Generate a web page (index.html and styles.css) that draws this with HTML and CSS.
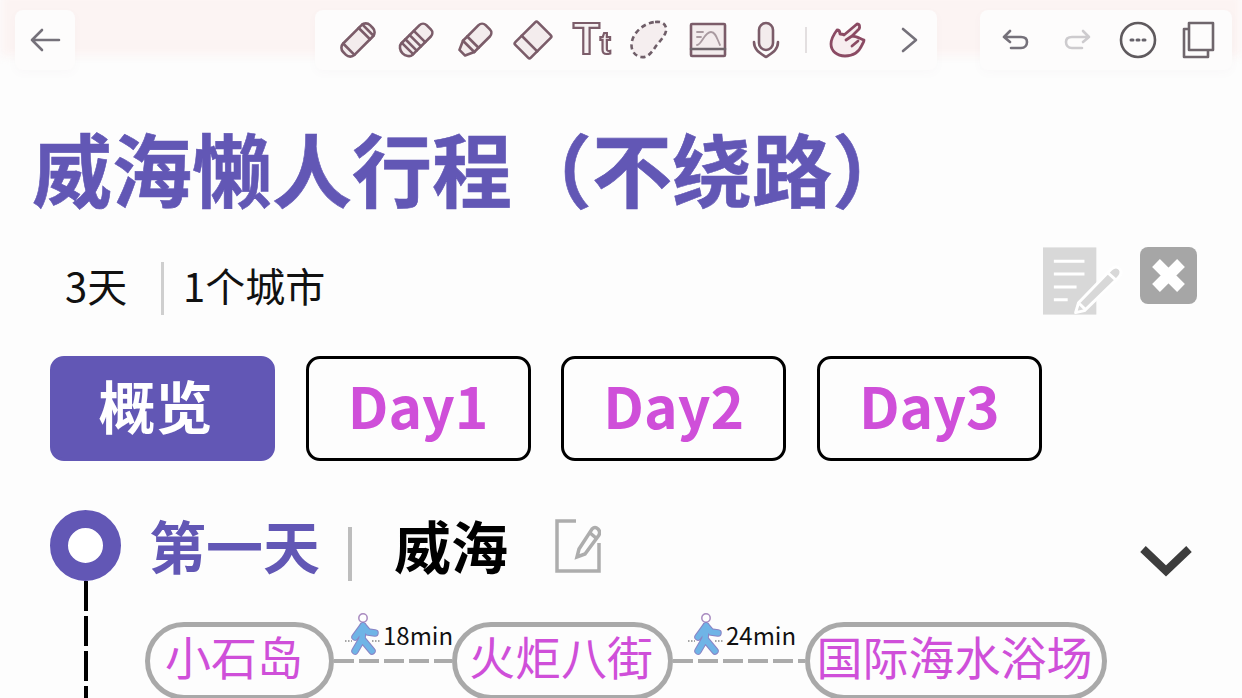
FILE: index.html
```html
<!DOCTYPE html>
<html lang="zh-CN">
<head>
  <meta charset="UTF-8">
  <meta name="viewport" content="width=device-width, initial-scale=1.0">
  <title>威海懒人行程</title>
  <link rel="stylesheet" href="styles.css">
</head>
<body>
  <div class="page">
    <div class="glow"></div>

    <!-- Top toolbars -->
    <header class="topbar">
      <div class="panel panel-back">
        <svg class="icon" viewBox="0 0 38 38"><path class="thin" d="M33 19H6M16 9 6 19l10 10"/></svg>
      </div>
      <div class="panel panel-tools">
        <svg class="icon" viewBox="0 0 38 38"><g transform="rotate(-45 19 19)"><rect class="ink" x="0" y="11" width="38" height="16" rx="6"/><path class="ink" d="M6 11v16M28 11v16M33 11v16"/></g></svg>
        <svg class="icon" viewBox="0 0 38 38"><g transform="rotate(-45 19 19)"><path class="ink" d="M6 11h26a5 5 0 0 1 5 5v6a5 5 0 0 1-5 5H6c-3 0-6-4-6-8s3-8 6-8z"/><path class="ink" d="M7 11v16M12 11v16M18 11v16M24 11v16"/></g></svg>
        <svg class="icon" viewBox="0 0 38 38"><g transform="rotate(-45 19 19)"><path class="ink" d="M10 11h22a5 5 0 0 1 5 5v6a5 5 0 0 1-5 5H10L1 23v-8z"/><path class="ink" d="M10 11v16M16 11v16"/></g></svg>
        <svg class="icon" viewBox="0 0 38 38"><g transform="rotate(-45 19 19)"><rect class="ink" x="3" y="8" width="32" height="22" rx="2"/><path class="ink" d="M14 8v22"/></g></svg>
        <svg class="icon" viewBox="0 0 38 38"><text class="tt" x="1" y="33">T<tspan class="tt-small">t</tspan></text></svg>
        <svg class="icon" viewBox="0 0 38 38"><path class="lasso" d="M25 1c8-1 12 3 11 9-1 5-6 10-10 15-4 6-8 12-15 11C4 35 0 28 2 20 4 11 14 2 25 1z"/></svg>
        <svg class="icon" viewBox="0 0 38 38"><rect class="ink" x="2" y="3" width="34" height="32" rx="1"/><path class="ink-plain" d="M2 28h34"/><path class="thin-soft" d="M8 24c5 0 7-13 14-13 5 0 6 7 9 13M8 11h6M8 16h4"/></svg>
        <svg class="icon" viewBox="0 0 38 38"><path class="ink-open" d="M7 21c0 8 6 11 12 15 6-4 12-7 12-15"/><rect class="ink" x="12" y="2" width="14" height="27" rx="7"/></svg>
        <span class="tool-sep"></span>
        <svg class="icon" viewBox="0 0 38 38"><path class="hand" d="M16 14 29 3c3 0 3 3 2 5l-7 7c4 0 7 2 12 4 0 2-1 3-2 5-3 7-9 11-17 11-8 0-14-5-14-12 0-6 3-10 6-14 2 0 3 2 3 4 1 0 3 0 4 1zM24 15l-6 4M30 20l-6 5"/></svg>
        <svg class="icon icon-next" viewBox="0 0 38 38"><path class="thin" d="m12 8 13 11-13 11"/></svg>
      </div>
      <div class="panel panel-actions">
        <svg class="icon" viewBox="0 0 38 38"><path class="thin" d="M13 10 7 16l6 5M7 16h17c4 0 6 2 6 5s-2 6-6 6H14"/></svg>
        <svg class="icon icon-muted" viewBox="0 0 38 38"><path class="thin" d="m25 10 6 6-6 5M31 16H14c-4 0-6 2-6 5s2 6 6 6h10"/></svg>
        <svg class="icon" viewBox="0 0 38 38"><circle class="ring" cx="19" cy="19" r="17"/><path class="dots" d="M12 19h2M18 19h2M24 19h2"/></svg>
        <svg class="icon" viewBox="0 0 38 38"><path class="ink-plain" d="M9 2h24v27H9zM9 8H4v28h24v-7"/></svg>
      </div>
    </header>

    <h1 class="title">威海懒人行程（不绕路）</h1>

    <!-- Trip summary -->
    <div class="meta">
      <span class="meta-days">3天</span>
      <span class="meta-cities">1个城市</span>
      <div class="meta-actions">
        <svg class="note" viewBox="0 0 80 68">
          <rect class="note-page" width="54" height="68"/>
          <path class="note-lines" d="M11 14h31M11 27h31M11 40h23M11 53h14"/>
          <path class="note-pen" d="M36 56 33 66l9-2 34-33c3-3 4-6 2-9-2-3-6-3-9 0z"/>
          <path class="note-pen-line" d="m37 57 6 6M66 26l8 7"/>
        </svg>
        <button class="close-btn" type="button">
          <svg viewBox="0 0 57 57"><path d="M16 16l25 25M41 16 16 41"/></svg>
        </button>
      </div>
    </div>

    <nav class="tabs">
      <a class="tab tab-active">概览</a>
      <a class="tab">Day1</a>
      <a class="tab">Day2</a>
      <a class="tab">Day3</a>
    </nav>

    <!-- Day 1 -->
    <section class="day">
      <div class="day-head">
        <span class="day-dot"></span>
        <span class="day-name">第一天</span>
        <span class="day-sep"></span>
        <span class="day-city">威海</span>
        <svg class="day-edit" viewBox="0 0 46 54">
          <path d="M21 2H2v50h42V24"/>
          <path d="M24 30 22 38l8-3 14-19c1-2 1-4-1-6-2-2-4-2-6 0zM34 13l7 6"/>
        </svg>
        <svg class="day-toggle" viewBox="0 0 52 32"><path d="M3 4l23 22L49 4"/></svg>
      </div>
      <div class="day-body">
        <span class="day-line"></span>
        <div class="route">
          <span class="stop stop-first">小石岛</span>
          <div class="leg leg-first">
            <div class="leg-info">
              <svg class="walker" viewBox="0 0 36 42">
                <path class="walker-trail" d="M0 28h7M27 28h8"/>
                <circle class="walker-head" cx="18" cy="5" r="4.2"/>
                <path class="walker-edge" d="M18 13 10 24M18 13l5 6 7 1M18 13l-1 13-7 12M17 26l10 12"/>
                <path class="walker-body" d="M18 13 10 24M18 13l5 6 7 1M18 13l-1 13-7 12M17 26l10 12"/>
              </svg>
              <span class="leg-time">18min</span>
            </div>
            <span class="leg-dash"></span>
          </div>
          <span class="stop stop-second">火炬八街</span>
          <div class="leg leg-second">
            <div class="leg-info">
              <svg class="walker" viewBox="0 0 36 42">
                <path class="walker-trail" d="M0 28h7M27 28h8"/>
                <circle class="walker-head" cx="18" cy="5" r="4.2"/>
                <path class="walker-edge" d="M18 13 10 24M18 13l5 6 7 1M18 13l-1 13-7 12M17 26l10 12"/>
                <path class="walker-body" d="M18 13 10 24M18 13l5 6 7 1M18 13l-1 13-7 12M17 26l10 12"/>
              </svg>
              <span class="leg-time">24min</span>
            </div>
            <span class="leg-dash"></span>
          </div>
          <span class="stop stop-third">国际海水浴场</span>
        </div>
      </div>
    </section>
  </div>
</body>
</html>
```

FILE: styles.css
```css
* {
  box-sizing: border-box;
}
html, body {
  margin: 0;
  height: 100%;
  overflow: hidden;
}
body {
  background: #fdfdfd;
  font-family: "Noto Sans CJK SC", "Noto Sans", sans-serif;
}
.page {
  position: relative;
  height: 698px;
  overflow: hidden;
}

/* toolbars */
.glow {
  position: absolute;
  top: -6px;
  left: 0;
  right: 0;
  height: 62px;
  background: #fcf4f3;
  filter: blur(5px);
}
.topbar {
  position: relative;
  display: flex;
  height: 80px;
  padding: 10px 10px 10px 15px;
}
.panel {
  display: flex;
  align-items: center;
  height: 60px;
  background: #fdfcfc;
  border-radius: 8px;
  box-shadow: 0 3px 10px rgba(120, 110, 120, 0.03);
}
.panel-back {
  width: 60px;
  padding-left: 11px;
}
.panel-tools {
  width: 622px;
  margin-left: 240px;
  padding-left: 24px;
  gap: 20.3px;
}
.panel-actions {
  width: 252px;
  margin-left: 43px;
  padding-left: 17px;
  gap: 23px;
}
.icon {
  flex: none;
  width: 38px;
  height: 38px;
  overflow: visible;
  filter: blur(0.5px);
}
.icon-next {
  margin-left: 5px;
}
.icon-muted {
  opacity: 0.35;
}
.ink, .ink-open, .ink-plain, .lasso, .hand, .ring, .thin, .thin-soft, .dots {
  fill: none;
  stroke: #6f5e68;
  stroke-width: 2.6;
  stroke-linejoin: round;
  stroke-linecap: round;
}
.ink {
  fill: #f3eced;
  stroke: #7b5c69;
}
.ink-open {
  stroke: #7b5c69;
}
.ink-plain {
  stroke: #6f666c;
}
.lasso {
  fill: #f5eeef;
  stroke-dasharray: 5 3.4;
  stroke-linecap: butt;
}
.hand {
  fill: #f7edef;
  stroke: #8b4a63;
  stroke-width: 2.8;
}
.ring {
  stroke: #5f5a5e;
}
.thin {
  stroke: #75717a;
}
.thin-soft {
  stroke: #a99aa0;
  stroke-width: 1.8;
}
.dots {
  stroke-width: 3;
  stroke: #66626a;
}
.tt {
  font-family: "Liberation Sans", sans-serif;
  font-size: 44px;
  font-weight: 700;
  fill: #f6f1f2;
  stroke: #7b5c69;
  stroke-width: 2.2;
}
.tt-small {
  font-size: 32px;
}
.tool-sep {
  flex: none;
  width: 2px;
  height: 26px;
  background: #e3dfe0;
}

/* title */
.title {
  position: relative;
  margin: 36px 0 0 32px;
  font-size: 80px;
  line-height: 100px;
  font-weight: 700;
  -webkit-text-stroke: 0.6px #6257b5;
  color: #6257b5;
  white-space: nowrap;
}

/* summary row */
.meta {
  position: relative;
  display: flex;
  align-items: flex-start;
  height: 68px;
  margin-top: 31px;
  padding: 15px 45px 0 65px;
  font-size: 40px;
  line-height: 53px;
  color: #111;
}
.meta-days {
  width: 99px;
  height: 53px;
  border-right: 3px solid #cfcfcf;
  line-height: 47px;
}
.meta-cities {
  margin-left: 19px;
  line-height: 47px;
}
.meta-actions {
  display: flex;
  gap: 18px;
  margin: -15px 0 0 auto;
}
.note {
  width: 79px;
  height: 68px;
  overflow: visible;
}
.note-page {
  fill: #d8d8d8;
}
.note-lines {
  fill: none;
  stroke: #fff;
  stroke-width: 3;
}
.note-pen {
  fill: #d8d8d8;
  stroke: #fff;
  stroke-width: 3;
  stroke-linejoin: round;
}
.note-pen-line {
  fill: none;
  stroke: #fff;
  stroke-width: 3;
}
.close-btn {
  width: 57px;
  height: 57px;
  padding: 0;
  border: 0;
  border-radius: 8px;
  background: #a6a6a6;
}
.close-btn svg {
  display: block;
  width: 57px;
  height: 57px;
  fill: none;
  stroke: #fff;
  stroke-width: 11;
}

/* tabs */
.tabs {
  position: relative;
  display: flex;
  gap: 30.6px;
  margin: 41px 0 0 50px;
}
.tab {
  display: flex;
  align-items: center;
  justify-content: center;
  width: 225px;
  height: 105px;
  padding-bottom: 10px;
  border: 3.5px solid #000;
  border-radius: 14px;
  font-size: 57px;
  font-weight: 700;
  color: #cf4fd9;
}
.tab-active {
  padding-right: 14px;
  background: #6257b5;
  border-color: #6257b5;
  color: #fff;
}

/* day section */
.day {
  position: relative;
  margin: 49px 0 0 50px;
}
.day-head {
  display: flex;
  align-items: center;
  height: 71px;
  padding-right: 50px;
}
.day-dot {
  flex: none;
  width: 71px;
  height: 71px;
  border: 18px solid #6257b5;
  border-radius: 50%;
  background: #fff;
}
.day-name, .day-city {
  font-size: 57px;
  line-height: 71px;
  font-weight: 700;
  color: #6257b5;
  white-space: nowrap;
}
.day-name {
  margin: -3px 0 0 28px;
  width: 171px;
}
.day-city {
  margin: -3px 0 0 42px;
  color: #000;
}
.day-sep {
  flex: none;
  width: 4px;
  height: 54px;
  margin: 17px 0 0 28px;
  background: #bdbdbd;
}
.day-edit {
  width: 46px;
  height: 54px;
  margin: 0 0 0 47px;
  fill: none;
  stroke: #adadad;
  stroke-width: 3.5;
}
.day-toggle {
  width: 52px;
  height: 32px;
  margin: 30px 0 0 auto;
  fill: none;
  stroke: #3d3d3d;
  stroke-width: 8;
}
.day-body {
  display: flex;
  height: 117px;
}
.day-line {
  flex: none;
  width: 4px;
  height: 117px;
  margin-left: 34px;
  background: repeating-linear-gradient(#000 0 30px, transparent 30px 35px);
}
.route {
  display: flex;
  margin: 41px 0 0 57px;
}
.stop {
  flex: none;
  display: flex;
  align-items: center;
  justify-content: center;
  height: 78px;
  padding-bottom: 12px;
  border: 5px solid #a9a9a9;
  border-radius: 39px;
  font-size: 46px;
  color: #cf4fd9;
  white-space: nowrap;
}
.stop-first {
  width: 189px;
  padding-right: 11px;
}
.stop-second {
  width: 221px;
  padding-right: 3px;
}
.stop-third {
  width: 302px;
  padding-right: 3px;
}
.leg {
  flex: none;
  position: relative;
  height: 78px;
}
.leg-first {
  width: 118px;
}
.leg-second {
  width: 132px;
}
.leg-info {
  position: absolute;
  left: 11px;
  top: -9px;
  display: flex;
  align-items: center;
  gap: 2px;
}
.leg-second .leg-info {
  left: 15px;
}
.leg-time {
  margin-top: 1px;
  font-size: 24px;
  line-height: 30px;
  color: #111;
}
.leg-dash {
  position: absolute;
  left: 0;
  right: 0;
  top: 37px;
  height: 4px;
  background: repeating-linear-gradient(90deg, #ababab 0 20px, transparent 20px 25px);
}
.walker {
  flex: none;
  width: 36px;
  height: 42px;
}
.walker-trail {
  fill: none;
  stroke: #888;
  stroke-width: 1.5;
  stroke-dasharray: 1.5 1.5;
}
.walker-head {
  fill: #fff;
  stroke: #a98bc0;
  stroke-width: 1.5;
}
.walker-edge, .walker-body {
  fill: none;
  stroke-linecap: round;
  stroke-linejoin: round;
}
.walker-edge {
  stroke: #8a84c4;
  stroke-width: 7.5;
}
.walker-body {
  stroke: #6fb4e6;
  stroke-width: 5.5;
}
```
